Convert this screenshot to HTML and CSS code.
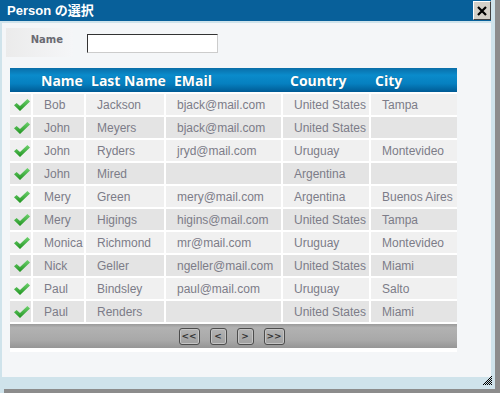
FILE: index.html
```html
<!DOCTYPE html>
<html lang="ja">
<head>
    <meta charset="UTF-8">
    <title>Person の選択</title>
    <link rel="stylesheet" href="styles.css">
</head>
<body>
    <div class="dialog">
        <div class="titlebar">
            <span class="title">Person の選択</span>
            <button class="close-btn" title="Close">
                <svg width="10" height="10" viewBox="0 0 10 10"><path d="M1 1 L9 9 M9 1 L1 9" stroke="#000" stroke-width="2.2" fill="none"/></svg>
            </button>
        </div>

        <div class="content">
            <div class="filter">
                <label class="filter-label" for="name-filter">Name</label>
                <input class="filter-input" type="text" id="name-filter">
            </div>

            <div class="grid">
                <table>
                    <thead>
                        <tr>
                            <th class="col-check"></th>
                            <th class="col-name">Name</th>
                            <th class="col-last">Last Name</th>
                            <th class="col-email">EMail</th>
                            <th class="col-country">Country</th>
                            <th class="col-city">City</th>
                        </tr>
                    </thead>
                    <tbody id="rows"></tbody>
                </table>
                <div class="pager">
                    <button class="pager-btn wide">&lt;&lt;</button>
                    <button class="pager-btn">&lt;</button>
                    <button class="pager-btn">&gt;</button>
                    <button class="pager-btn wide">&gt;&gt;</button>
                </div>
            </div>
        </div>

        <!-- resize grip -->
        <svg class="grip" width="9" height="9" viewBox="0 0 9 9">
            <path d="M8 0h1v1h-1z M6 2h1v1h-1z M8 2h1v1h-1z M4 4h1v1h-1z M6 4h1v1h-1z M8 4h1v1h-1z M2 6h1v1h-1z M4 6h1v1h-1z M6 6h1v1h-1z M8 6h1v1h-1z M0 8h1v1h-1z M2 8h1v1h-1z M4 8h1v1h-1z M6 8h1v1h-1z M8 8h1v1h-1z M7 1h1v1h-1z M5 3h1v1h-1z M7 3h1v1h-1z M3 5h1v1h-1z M5 5h1v1h-1z M7 5h1v1h-1z M1 7h1v1h-1z M3 7h1v1h-1z M5 7h1v1h-1z M7 7h1v1h-1z" fill="#000"/>
        </svg>
    </div>

    <script>
        const people = [
            ['Bob', 'Jackson', 'bjack@mail.com', 'United States', 'Tampa'],
            ['John', 'Meyers', 'bjack@mail.com', 'United States', ''],
            ['John', 'Ryders', 'jryd@mail.com', 'Uruguay', 'Montevideo'],
            ['John', 'Mired', '', 'Argentina', ''],
            ['Mery', 'Green', 'mery@mail.com', 'Argentina', 'Buenos Aires'],
            ['Mery', 'Higings', 'higins@mail.com', 'United States', 'Tampa'],
            ['Monica', 'Richmond', 'mr@mail.com', 'Uruguay', 'Montevideo'],
            ['Nick', 'Geller', 'ngeller@mail.com', 'United States', 'Miami'],
            ['Paul', 'Bindsley', 'paul@mail.com', 'Uruguay', 'Salto'],
            ['Paul', 'Renders', '', 'United States', 'Miami']
        ];

        const checkIcon = '<svg width="16" height="12" viewBox="0 0 16 12">' +
            '<defs><linearGradient id="g" x1="0" y1="0" x2="0" y2="1">' +
            '<stop offset="0" stop-color="#6fd36f"/><stop offset="1" stop-color="#1f921f"/></linearGradient></defs>' +
            '<polygon points="0,6.2 2.6,4 6,7 13.4,0 16,2.4 6,12" fill="url(#g)"/></svg>';

        const tbody = document.getElementById('rows');
        people.forEach(function (p) {
            const tr = document.createElement('tr');
            let html = '<td class="check">' + checkIcon + '</td>';
            p.forEach(function (v) {
                html += '<td>' + v + '</td>';
            });
            tr.innerHTML = html;
            tbody.appendChild(tr);
        });
    </script>
</body>
</html>
```

FILE: styles.css
```css
body {
    margin: 0;
    width: 500px;
    height: 393px;
    overflow: hidden;
    background: linear-gradient(to right, #cfe3eb 4px, #8c8c8c 4px);
    font-family: "Liberation Sans", Arial, sans-serif;
}

.dialog {
    position: relative;
    width: 495px;
    height: 389px;
    box-sizing: border-box;
    padding: 0 4px 12px 0;
    background: #cfe3eb;
    display: flex;
    flex-direction: column;
}

.titlebar {
    height: 21px;
    background: #08609a;
    display: flex;
    align-items: flex-start;
    justify-content: space-between;
}

.title {
    margin-left: 7px;
    line-height: 21px;
    font-size: 13px;
    font-weight: bold;
    color: #fff;
    font-family: "Liberation Sans", "Noto Sans CJK JP", sans-serif;
}

.close-btn {
    width: 18px;
    height: 19px;
    margin: 1px 0 0 0;
    padding: 0;
    background: #d4d0c8;
    border: 1px solid;
    border-color: #fff #404040 #404040 #fff;
    display: flex;
    align-items: center;
    justify-content: center;
}

.content {
    flex: 1;
    margin: 2px 0 0 2px;
    background: #f4f6f8;
}

.filter {
    display: flex;
    align-items: flex-start;
    margin: 5px 0 0 4px;
}

.filter-label {
    width: 67px;
    height: 29px;
    box-sizing: border-box;
    padding: 6px 10px 0 0;
    text-align: right;
    font-family: "DejaVu Sans", Verdana, sans-serif;
    font-size: 10px;
    font-weight: bold;
    color: #6a6a72;
    background: linear-gradient(to right, #ebebeb, #f5f6f8);
}

.filter-input {
    width: 131px;
    height: 19px;
    box-sizing: border-box;
    margin: 6px 0 0 14px;
    padding: 0 3px;
    border: 1px solid;
    border-color: #333 #ccc #ccc #333;
    background: #fff;
}

.grid {
    width: 447px;
    margin: 11px 0 0 8px;
    padding-bottom: 4px;
    background: #fff;
}

table {
    width: 447px;
    border-collapse: separate;
    border-spacing: 0;
    table-layout: fixed;
}

th {
    height: 24px;
    box-sizing: border-box;
    padding: 0 0 0 8px;
    text-align: left;
    font-family: "Open Sans", sans-serif;
    font-size: 14px;
    font-weight: bold;
    color: #fff;
    text-shadow: 0 0 1px rgba(0, 0, 0, 0.35);
    background: linear-gradient(#0a6ea8, #0a8bcb 30%, #0680c0 65%, #005b95);
    white-space: nowrap;
}

.col-check { width: 23px; }
.col-name { width: 53px; }
.col-last { width: 80px; padding-left: 5px; }
.col-email { width: 117px; }
.col-country { width: 88px; padding-left: 7px; }
.col-city { width: 86px; padding-left: 4px; }

td {
    height: 23px;
    box-sizing: border-box;
    padding: 0 0 0 11px;
    border-top: 2px solid #fff;
    border-right: 2px solid #fff;
    font-size: 12px;
    color: #7c7c88;
    white-space: nowrap;
    overflow: hidden;
}

td:last-child {
    border-right: none;
}

tbody tr:nth-child(odd) td {
    background: #f0f0f0;
}

tbody tr:nth-child(even) td {
    background: #e4e4e4;
}

td.check {
    padding: 0 0 0 4px;
    line-height: 0;
}

.pager {
    height: 24px;
    margin-top: 2px;
    padding-right: 4px;
    display: flex;
    align-items: center;
    justify-content: center;
    gap: 10px;
    background: linear-gradient(#9a9a9a, #b2b2b2 15%, #a8a8a8 70%, #969696);
}

.pager-btn {
    width: 17px;
    height: 17px;
    padding: 0;
    border: 1px solid #4c4c4c;
    border-radius: 3px;
    background: linear-gradient(#b4b4b4, #a0a0a0);
    box-shadow: inset 0 0 0 1px #c4c4c4;
    font-family: "DejaVu Sans", Verdana, sans-serif;
    font-size: 9px;
    font-weight: bold;
    color: #333;
    line-height: 15px;
}

.pager-btn.wide {
    width: 21px;
}

.grip {
    position: absolute;
    right: 3px;
    bottom: 4px;
}
```
